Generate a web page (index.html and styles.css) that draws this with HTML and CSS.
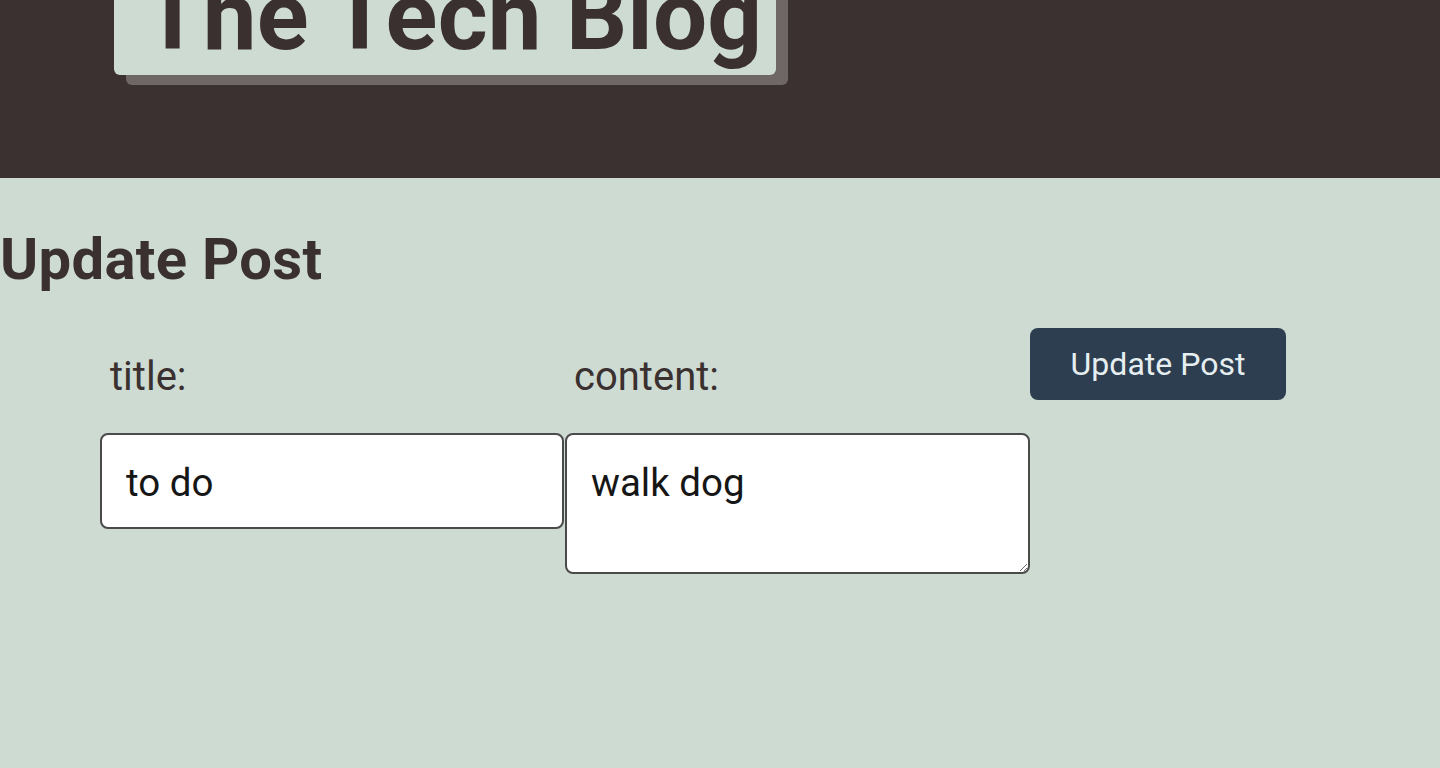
FILE: index.html
```html
<!DOCTYPE html>
<html lang="en">
<head>
<meta charset="utf-8">
<title>The Tech Blog</title>
<link rel="stylesheet" href="styles.css">
</head>
<body>
<header class="site-header">
  <h1 class="brand">The Tech Blog</h1>
</header>
<main class="page">
  <h2 class="page-title">Update Post</h2>
  <form class="post-form">
    <div class="field field-title">
      <label class="field-label" for="title">title:</label>
      <input class="field-input" id="title" type="text" value="to do">
    </div>
    <div class="field field-content">
      <label class="field-label" for="content">content:</label>
      <textarea class="field-input field-area" id="content">walk dog</textarea>
    </div>
    <button class="submit-btn" type="submit">Update Post</button>
  </form>
</main>
</body>
</html>
```
FILE: styles.css
```css
* { box-sizing: border-box; }
html, body {
  margin: 0;
  padding: 0;
}
body {
  background: #cddbd2;
  color: #3a3030;
  font-family: Roboto, "Liberation Sans", sans-serif;
  min-height: 768px;
}
.site-header {
  background: #3b3131;
  height: 178px;
  padding-left: 114px;
  overflow: hidden;
}
.brand {
  display: block;
  width: 662px;
  height: 107px;
  margin: -32px 0 0 0;
  padding: 0 0 0 29px;
  background: #cddbd2;
  border-radius: 6px;
  box-shadow: 12px 10px 0 #6f6766;
  font-size: 96px;
  font-weight: 700;
  line-height: 96px;
  color: #3a3030;
  white-space: nowrap;
  letter-spacing: 0.2px;
}
.page-title {
  margin: 46px 0 0 0;
  font-size: 58px;
  font-weight: 700;
  line-height: 70px;
  letter-spacing: 0.3px;
}
.post-form {
  display: flex;
  align-items: flex-start;
  padding-left: 100px;
  margin-top: 34px;
}
.field {
  display: flex;
  flex-direction: column;
}
.field-title { width: 464px; }
.field-content { width: 465px; margin-left: 1px; }
.field-label {
  font-size: 40px;
  line-height: 48px;
  padding-left: 10px;
  margin-top: 25px;
  margin-bottom: 32px;
}
.field-content .field-label { padding-left: 9px; }
.field-input {
  font-family: inherit;
  font-size: 38.5px;
  color: #161616;
  background: #fff;
  border: 2px solid #4a4a4a;
  border-radius: 8px;
  padding: 3px 24px 0 24px;
  width: 100%;
  height: 96px;
  margin: 0;
}
.field-area {
  display: block;
  height: 141px;
  padding: 26px 24px 0 24px;
  line-height: 44px;
  resize: both;
}
.submit-btn {
  background: #2d3e50;
  color: #e6eef0;
  font-family: inherit;
  font-size: 32px;
  border: 0;
  border-radius: 8px;
  width: 256px;
  height: 72px;
  padding: 0;
}
```
